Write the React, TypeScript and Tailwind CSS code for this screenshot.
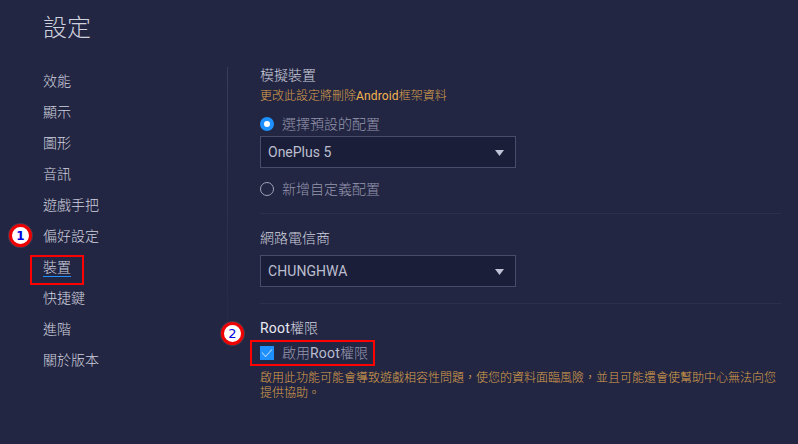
import React from "react";

const menu = ["效能", "顯示", "圖形", "音訊", "遊戲手把", "偏好設定", "裝置", "快捷鍵", "進階", "關於版本"];

function Badge({ label, className }: { label: string; className: string }) {
  return (
    <span
      className={`absolute flex size-[23px] items-center justify-center rounded-full border-[3px] border-[#ee0000] bg-white font-['DejaVu_Sans',sans-serif] leading-none text-[#0000e0] shadow-[0_0_0_1px_#4a3a50] ${className}`}
    >
      {label}
    </span>
  );
}

function Select({ value, className }: { value: string; className: string }) {
  return (
    <div className="flex h-8 w-64 items-center justify-between border border-[#484b6a] bg-[#1b1e38] pr-[11px] pl-[7px] text-[#bcbed0]">
      <span className={className}>{value}</span>
      <svg width="9" height="6" viewBox="0 0 9 6" className="mt-px">
        <path d="M0 0H9L4.5 6Z" fill="#c0c2d8" />
      </svg>
    </div>
  );
}

function Radio({ label, checked }: { label: string; checked?: boolean }) {
  return (
    <div className="flex h-5 items-center gap-2 text-[#9597ae]">
      {checked ? (
        <span className="size-3.5 rounded-full border-4 border-[#1e90ff] bg-white" />
      ) : (
        <span className="size-3.5 rounded-full border border-[#a0a2b8]" />
      )}
      <span className="-mt-px leading-5">{label}</span>
    </div>
  );
}

export default function App() {
  return (
    <div className="relative flex h-[444px] w-[798px] overflow-hidden bg-[#232642] font-[Roboto,'Noto_Sans_CJK_TC',sans-serif] text-sm font-light text-[#cfd1df]">
      <aside className="w-[227px] shrink-0 pl-[43px]">
        <h1 className="mt-2.5 h-9 text-2xl leading-9">設定</h1>
        <nav className="mt-5 flex flex-col">
          {menu.map((item) => (
            <div key={item} className="flex h-[31px] items-start pt-[5px]">
              <span className={item === "裝置" ? "h-5 border-b border-[#1e90ff] leading-5" : "h-5 leading-5"}>{item}</span>
            </div>
          ))}
        </nav>
      </aside>
      <div className="mt-[67px] h-[294px] w-px shrink-0 bg-linear-to-b from-[#3a3d5a] to-[#232642]" />
      <main className="ml-8 w-[521px] pt-[65px]">
        <section className="h-[148px]">
          <h2 className="h-5 leading-5">模擬裝置</h2>
          <p className="mt-0.5 h-[18px] text-xs leading-[18px] text-[#dba04c]">
            更改此設定將刪除<span className="font-normal tracking-[0.15px] text-[#f4b450]">Android</span>框架資料
          </p>
          <div className="h-[9px]" />
          <Radio label="選擇預設的配置" checked />
          <div className="h-0.5" />
          <Select value="OnePlus 5" className="font-normal" />
          <div className="h-[11px]" />
          <Radio label="新增自定義配置" />
        </section>
        <section className="h-[90px] border-t border-[#2d304d] pt-3.5">
          <h2 className="h-[27px] leading-5">網路電信商</h2>
          <Select value="CHUNGHWA" className="font-normal tracking-[0.07px]" />
        </section>
        <section className="border-t border-[#2d304d] pt-3.5">
          <h2 className="h-5 leading-5">
            <span className="font-normal tracking-[0.2px] text-[#e8e9f2]">Root</span>權限
          </h2>
          <div className="mt-[5px] flex h-5 items-center gap-2 text-[#9597ae]">
            <svg width="14" height="14" viewBox="0 0 14 14">
              <rect width="14" height="14" fill="#1e90ff" />
              <path d="M2 6.5L5.5 10.5L12 3.5" fill="none" stroke="#a9d4ff" strokeWidth="1.1" />
            </svg>
            <span>
              啟用<span className="font-normal tracking-[0.2px] text-[#b9bbce]">Root</span>權限
            </span>
          </div>
          <p className="mt-2 text-xs leading-[15px] text-[#dba04c]">
            啟用此功能可能會導致遊戲相容性問題，使您的資料面臨風險，並且可能還會使幫助中心無法向您提供協助。
          </p>
        </section>
      </main>
      <div className="absolute top-[255px] left-[30px] h-[30px] w-[54px] border-2 border-[#ff0000]" />
      <div className="absolute top-[340px] left-[250px] h-[26px] w-[125px] border-2 border-[#ff0000]" />
      <Badge label="1" className="top-[224px] left-[9px] text-[12px] font-bold" />
      <Badge label="2" className="top-[322px] left-[221px] text-[13px] font-normal" />
    </div>
  );
}
